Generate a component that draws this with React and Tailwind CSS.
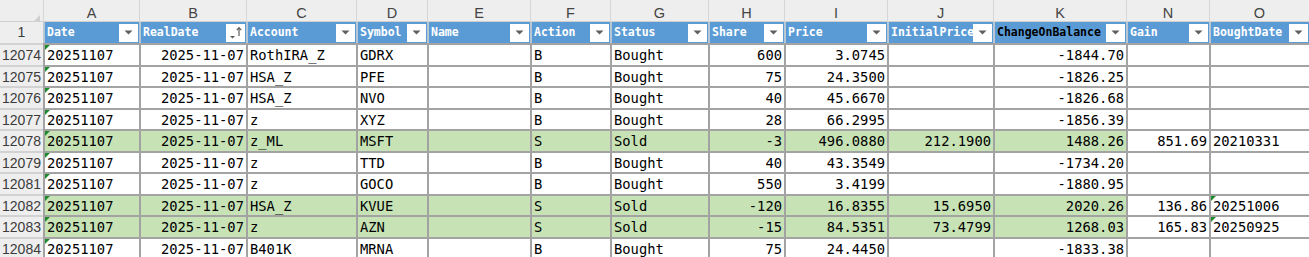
import React from "react";

const GRID =
  "grid grid-cols-[43px_96px_107px_110px_71px_103px_80px_98px_76px_103px_106px_133px_83px_100px]";

const letters = ["A", "B", "C", "D", "E", "F", "G", "H", "I", "J", "K", "N", "O"];

const headers = [
  { t: "Date" },
  { t: "RealDate", sort: true },
  { t: "Account" },
  { t: "Symbol" },
  { t: "Name" },
  { t: "Action" },
  { t: "Status" },
  { t: "Share" },
  { t: "Price" },
  { t: "InitialPrice" },
  { t: "ChangeOnBalance", dark: true },
  { t: "Gain" },
  { t: "BoughtDate" },
];

// r = right aligned
const right = [false, true, false, false, false, false, false, true, true, true, true, true, false];

const rows = [
  { n: "12074", c: ["20251107", "2025-11-07", "RothIRA_Z", "GDRX", "", "B", "Bought", "600", "3.0745", "", "-1844.70", "", ""] },
  { n: "12075", c: ["20251107", "2025-11-07", "HSA_Z", "PFE", "", "B", "Bought", "75", "24.3500", "", "-1826.25", "", ""] },
  { n: "12076", c: ["20251107", "2025-11-07", "HSA_Z", "NVO", "", "B", "Bought", "40", "45.6670", "", "-1826.68", "", ""] },
  { n: "12077", c: ["20251107", "2025-11-07", "z", "XYZ", "", "B", "Bought", "28", "66.2995", "", "-1856.39", "", ""] },
  { n: "12078", sold: true, c: ["20251107", "2025-11-07", "z_ML", "MSFT", "", "S", "Sold", "-3", "496.0880", "212.1900", "1488.26", "851.69", "20210331"] },
  { n: "12079", c: ["20251107", "2025-11-07", "z", "TTD", "", "B", "Bought", "40", "43.3549", "", "-1734.20", "", ""] },
  { n: "12081", c: ["20251107", "2025-11-07", "z", "GOCO", "", "B", "Bought", "550", "3.4199", "", "-1880.95", "", ""] },
  { n: "12082", sold: true, flagO: true, c: ["20251107", "2025-11-07", "HSA_Z", "KVUE", "", "S", "Sold", "-120", "16.8355", "15.6950", "2020.26", "136.86", "20251006"] },
  { n: "12083", sold: true, flagO: true, c: ["20251107", "2025-11-07", "z", "AZN", "", "S", "Sold", "-15", "84.5351", "73.4799", "1268.03", "165.83", "20250925"] },
  { n: "12084", c: ["20251107", "2025-11-07", "B401K", "MRNA", "", "B", "Bought", "75", "24.4450", "", "-1833.38", "", ""] },
];

function Flag() {
  return (
    <span className="absolute top-0 left-0 w-0 h-0 border-t-[5px] border-r-[5px] border-t-[#1e8a2c] border-r-transparent" />
  );
}

function FilterButton({ sort }) {
  return (
    <div className="shrink-0 w-[19px] h-[18px] bg-white flex items-center justify-center">
      {sort ? (
        <svg width="19" height="18" viewBox="0 0 19 18">
          <path d="M4 12 L9 12 L6.5 14.5 Z" fill="#5a5a5a" />
          <path d="M13 4 L13 12" stroke="#5a5a5a" strokeWidth="1.2" />
          <path d="M10.8 6.2 L13 3.6 L15.2 6.2" fill="none" stroke="#5a5a5a" strokeWidth="1.2" />
        </svg>
      ) : (
        <svg width="9" height="5" viewBox="0 0 9 5">
          <path d="M0.5 0.5 L8.5 0.5 L4.5 4.5 Z" fill="#5f5f5f" />
        </svg>
      )}
    </div>
  );
}

export default function App() {
  return (
    <div className="w-[1309px] h-[257px] overflow-hidden bg-white font-['DejaVu_Sans_Mono',monospace] text-black">
      {/* column letters */}
      <div className={`${GRID} h-[22px] bg-[#eeeeee] border-b border-[#d0d0d0] font-['Liberation_Sans',Arial,sans-serif] text-[14.5px] text-[#444]`}>
        <div className="relative flex items-center justify-center">
          <span className="absolute right-[3px] bottom-[3px] w-0 h-0 border-b-[7px] border-l-[7px] border-b-[#cfcfcf] border-l-transparent" />
        </div>
        {letters.map((l) => (
          <div key={l} className="flex items-center justify-center pt-[3px] border-l border-[#d6d6d6]">
            {l}
          </div>
        ))}
      </div>

      {/* header row */}
      <div className={`${GRID} h-[21px]`}>
        <div className="flex items-center justify-center bg-[#eeeeee] font-['Liberation_Sans',Arial,sans-serif] text-[14px] text-[#3b3b3b]">
          1
        </div>
        {headers.map((h) => (
          <div
            key={h.t}
            className="flex items-center border-l-2 border-[#b9c6d3] bg-[#5b9bd5] pl-[2px] pr-[1px] min-w-0"
          >
            <span
              className={`flex-1 min-w-0 overflow-hidden whitespace-nowrap text-[11.5px] font-bold ${
                h.dark ? "text-black" : "text-white"
              }`}
            >
              {h.t}
            </span>
            <FilterButton sort={h.sort} />
          </div>
        ))}
      </div>

      {/* data rows */}
      {rows.map((r) => (
        <div key={r.n} className={`${GRID} h-[21.5px]`}>
          <div className="flex items-center justify-center bg-[#eeeeee] border-t-2 border-[#d2d2d2] font-['Liberation_Sans',Arial,sans-serif] text-[14px] text-[#3b3b3b]">
            {r.n}
          </div>
          {r.c.map((v, i) => {
            const green = r.sold && i <= 10;
            return (
              <div
                key={i}
                className={`relative flex items-center border-t-2 border-l-2 border-[#a3a3a3] px-[2px] text-[13.8px] whitespace-nowrap overflow-hidden ${
                  right[i] ? "justify-end" : "justify-start"
                } ${green ? "bg-[#c7e3b6]" : "bg-white"}`}
              >
                {(i === 0 || (i === 12 && r.flagO)) && <Flag />}
                {v}
              </div>
            );
          })}
        </div>
      ))}
    </div>
  );
}
